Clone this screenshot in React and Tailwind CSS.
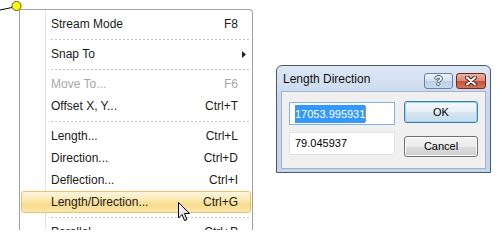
import React from "react";

const menuItems = [
  { label: "Stream Mode", shortcut: "F8" },
  { sep: true },
  { label: "Snap To", submenu: true },
  { sep: true },
  { label: "Move To...", shortcut: "F6", disabled: true },
  { label: "Offset X, Y...", shortcut: "Ctrl+T" },
  { sep: true },
  { label: "Length...", shortcut: "Ctrl+L" },
  { label: "Direction...", shortcut: "Ctrl+D" },
  { label: "Deflection...", shortcut: "Ctrl+I" },
  { label: "Length/Direction...", shortcut: "Ctrl+G", active: true },
  { sep: true },
  { label: "Parallel", shortcut: "Ctrl+P" },
];

const ContextMenu = () => {
  return (
    <div className="absolute left-[19px] top-[9px] w-[234px] h-[221px] overflow-hidden border border-b-0 border-[#a0a0a0] rounded-tr-[4px] bg-[linear-gradient(to_right,#fff_25px,#e2e3e3_25px,#e2e3e3_26px,#fff_26px)] pt-[3px] text-[12px] text-[#1b1b1b]">
      {menuItems.map((item, index) =>
        item.sep ? (
          <div key={index} className="h-[8px] flex items-center pl-[31px] pr-[1px]">
            <div className="h-px w-full bg-[repeating-linear-gradient(to_right,#c5c5c5_0_2px,transparent_2px_4px)]" />
          </div>
        ) : (
          <div
            key={index}
            className={
              item.active
                ? "mx-[1px] h-[22px] flex items-center justify-between pl-[29px] pr-[12px] border border-[#e5c46c] rounded-[3px] bg-[linear-gradient(to_bottom,#fdf6de,#fbe9b2_40%,#f8dc8c_60%,#fbe6ac)]"
                : item.submenu
                ? "mx-[1px] h-[22px] flex items-center justify-between pl-[30px] pr-[5px]"
                : "mx-[1px] h-[22px] flex items-center justify-between pl-[30px] pr-[13px]"
            }
          >
            <span className={item.disabled ? "text-[#a7a7a7]" : ""}>{item.label}</span>
            {item.submenu ? (
              <svg width="4" height="7" viewBox="0 0 4 7">
                <path d="M0 0 L4 3.5 L0 7 Z" fill="#222" />
              </svg>
            ) : (
              <span className={item.disabled ? "text-[#a7a7a7]" : ""}>{item.shortcut}</span>
            )}
          </div>
        )
      )}
    </div>
  );
};

const LengthDialog = () => {
  return (
    <div className="absolute left-[276px] top-[65px] w-[215px] h-[108px] flex flex-col border border-[#4f5966] rounded-t-[6px] bg-[linear-gradient(to_bottom,#dce7f5,#c8d9ee_30%,#c4d6ec)] text-[11px] text-black">
      {/* Title bar */}
      <div className="h-[25px] flex items-center justify-between pl-[6px] pr-[4px]">
        <span className="text-[12px] text-[#111]">Length Direction</span>
        <div className="flex gap-[3px] pt-[4px]">
          <div className="w-[29px] h-[16px] rounded-[3px] border border-[#6b7f9b] bg-[linear-gradient(to_bottom,#eaf1fa,#d3e0f1_50%,#bccfe8_50%,#c9daee)] flex items-center justify-center">
            <span className="text-[13px] font-bold text-white leading-none [text-shadow:1px_0_0_#3d5675,-1px_0_0_#3d5675,0_1px_0_#3d5675,0_-1px_0_#3d5675]">?</span>
          </div>
          <div className="w-[30px] h-[16px] rounded-[3px] border border-[#6e2b20] bg-[linear-gradient(to_bottom,#eab1a3,#d98671_50%,#c7503a_50%,#d2735d)] flex items-center justify-center">
            <svg width="12" height="10" viewBox="0 0 12 10">
              <path d="M2 1.5 L10 8.5 M10 1.5 L2 8.5" stroke="#4a1a12" strokeWidth="4" strokeLinecap="round" />
              <path d="M2 1.5 L10 8.5 M10 1.5 L2 8.5" stroke="#fff" strokeWidth="2.2" strokeLinecap="round" />
            </svg>
          </div>
        </div>
      </div>

      {/* Client area */}
      <div className="flex-1 mx-[4px] mb-[3px] bg-[#f0f0f0] border border-[#9fb3cf] flex">
        <div className="pl-[7px] pt-[10px] flex flex-col gap-[7px]">
          <div className="w-[106px] h-[23px] bg-white border border-[#7eb4ea] flex items-center pl-[5px]">
            <span className="bg-[#3399ff] text-white leading-[18px] h-[18px]">17053.995931</span>
            <span className="w-px h-[16px] bg-[#d08a30]" />
          </div>
          <div className="w-[106px] h-[23px] bg-white border border-[#e2e3ea] flex items-center pl-[5px]">
            <span>79.045937</span>
          </div>
        </div>
        <div className="ml-[9px] pt-[9px] flex flex-col gap-[13px]">
          <button className="w-[74px] h-[22px] rounded-[3px] border border-[#3c7fb1] bg-[linear-gradient(to_bottom,#f4f8fb,#e8f0f7_50%,#d6e6f3_50%,#c8dcec)] shadow-[inset_0_0_0_1px_#9ed4f5] flex items-center justify-center">
            OK
          </button>
          <button className="w-[74px] h-[21px] rounded-[3px] border border-[#707070] bg-[linear-gradient(to_bottom,#f2f2f2,#ebebeb_50%,#dddddd_50%,#cfcfcf)] shadow-[inset_0_0_0_1px_#fcfcfc] flex items-center justify-center">
            Cancel
          </button>
        </div>
      </div>
    </div>
  );
};

const App = () => {
  return (
    <div className="relative w-[500px] h-[250px] overflow-hidden bg-white font-['Liberation_Sans',Arial,sans-serif]">
      {/* drawn element with yellow grip */}
      <svg className="absolute left-0 top-0" width="24" height="14" viewBox="0 0 24 14">
        <path d="M0 10 L12 7.5" stroke="#000" strokeWidth="1" />
        <circle cx="16.5" cy="6" r="4.5" fill="#ffff00" stroke="#5a5a00" strokeWidth="1" />
      </svg>

      <ContextMenu />

      {/* mouse pointer */}
      <svg className="absolute left-[177px] top-[201px]" width="14" height="22" viewBox="0 0 14 22">
        <defs>
          <linearGradient id="cur" x1="0" y1="0" x2="1" y2="1">
            <stop offset="0" stopColor="#ffffff" />
            <stop offset="1" stopColor="#d0d0d0" />
          </linearGradient>
        </defs>
        <path d="M1.5 1.5 L1.5 17 L5 13.5 L7.5 19.5 L10 18.5 L7.5 12.5 L12.5 12.5 Z" fill="url(#cur)" stroke="#000" strokeWidth="1" strokeLinejoin="round" />
      </svg>

      <LengthDialog />
    </div>
  );
};

export default App;
